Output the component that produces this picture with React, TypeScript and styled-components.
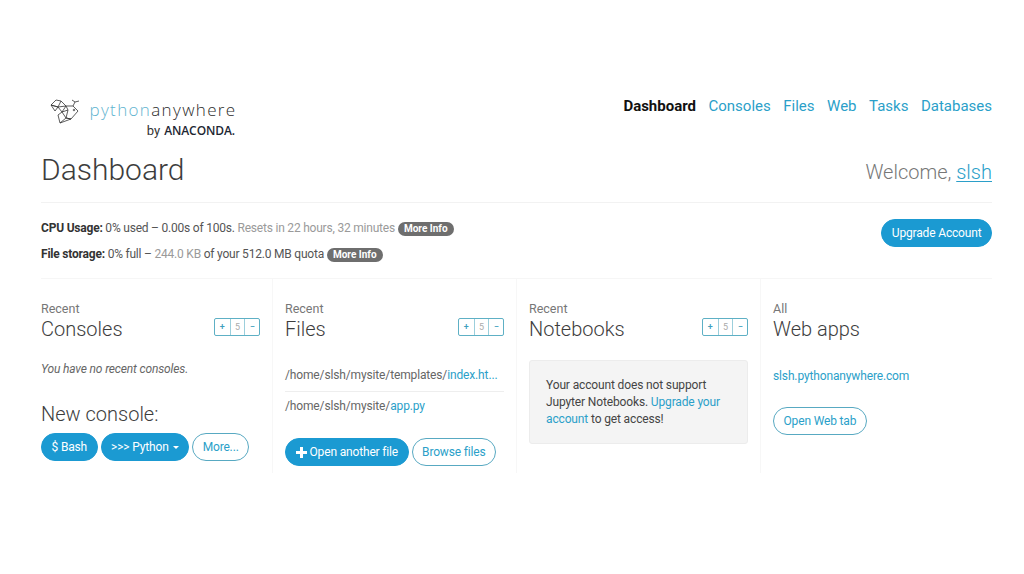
import React from "react";
import styled, { createGlobalStyle } from "styled-components";

const GlobalStyle = createGlobalStyle`
  html, body {
    margin: 0;
    padding: 0;
    background: #fff;
    font-family: Roboto, "Liberation Sans", sans-serif;
    color: #444;
  }
  * { box-sizing: border-box; }
`;

const BLUE = "#1b9ad2";
const LINK = "#2b9fc9";

const Page = styled.div`
  width: 1024px;
  height: 574px;
  padding: 92px 32px 0 41px;
  overflow: hidden;
`;

const TopBar = styled.header`
  display: flex;
  justify-content: space-between;
  align-items: flex-start;
  height: 50px;
`;

const Logo = styled.div`
  display: flex;
  flex-direction: column;
  align-items: flex-end;
  width: 194px;
  padding-top: 7px;
  position: relative;
`;

const LogoMark = styled.svg`
  position: absolute;
  left: 9px;
  top: 6px;
  width: 33px;
  height: 27px;
`;

const LogoWord = styled.div`
  margin-right: -1.5px;
  font-family: "Open Sans", sans-serif;
  font-size: 17px;
  font-weight: 300;
  line-height: 21px;
  letter-spacing: 1.35px;
  color: #2b2b2b;
  span { color: #5fb4cf; }
`;

const LogoBy = styled.div`
  display: flex;
  align-items: baseline;
  gap: 4px;
  margin-top: 2px;
  font-size: 13px;
  color: #333;
  b {
    font-family: "Open Sans", sans-serif;
    font-size: 12px;
    font-weight: 600;
    color: #1d2733;
    letter-spacing: -0.1px;
  }
`;

const Nav = styled.nav`
  display: flex;
  gap: 12.5px;
  padding-top: 3px;
`;

const NavItem = styled.a<{ $active?: boolean }>`
  font-size: 15px;
  line-height: 22px;
  font-weight: ${p => (p.$active ? 700 : 400)};
  color: ${p => (p.$active ? "#111" : LINK)};
`;

const TitleRow = styled.div`
  display: flex;
  justify-content: space-between;
  align-items: flex-start;
  height: 61px;
  padding-top: 10px;
  border-bottom: 1px solid #f2f2f2;
`;

const PageTitle = styled.h1`
  margin: 0;
  font-size: 30px;
  line-height: 36px;
  font-weight: 300;
  color: #3d3d3d;
`;

const Welcome = styled.div`
  margin-top: 7px;
  font-size: 20px;
  line-height: 26px;
  font-weight: 300;
  color: #777;
  a {
    color: ${LINK};
    text-decoration: underline;
    text-underline-offset: 2px;
    text-decoration-thickness: 1px;
  }
`;

const UsageRow = styled.div`
  display: flex;
  justify-content: space-between;
  align-items: flex-start;
  height: 76px;
  padding-top: 16px;
  border-bottom: 1px solid #f6f6f6;
`;

const UsageList = styled.div`
  display: flex;
  flex-direction: column;
  gap: 8px;
`;

const UsageLine = styled.div`
  font-size: 12px;
  line-height: 18px;
  letter-spacing: -0.21px;
  color: #555;
  b { color: #333; font-weight: 700; }
  i { font-style: normal; color: #9a9a9a; }
`;

const Badge = styled.span`
  display: inline-block;
  margin-left: 3px;
  padding: 0 6px;
  height: 14px;
  line-height: 14px;
  border-radius: 7px;
  background: #6e6e6e;
  color: #fff;
  font-size: 10px;
  font-weight: 700;
  letter-spacing: 0;
`;

const Pill = styled.a<{ $outline?: boolean }>`
  display: inline-flex;
  align-items: center;
  justify-content: center;
  gap: 3px;
  height: 28px;
  padding: 0 9.5px;
  border-radius: 14px;
  border: 1px solid ${p => (p.$outline ? "#58a9c2" : BLUE)};
  background: ${p => (p.$outline ? "#fff" : BLUE)};
  color: ${p => (p.$outline ? LINK : "#fff")};
  font-size: 12px;
  letter-spacing: -0.16px;
  white-space: nowrap;
`;

const Caret = styled.span`
  width: 0;
  height: 0;
  margin-left: 1px;
  border-left: 3px solid transparent;
  border-right: 3px solid transparent;
  border-top: 3px solid #fff;
`;

const Columns = styled.div`
  display: grid;
  grid-template-columns: 231px 244px 244px 232px;
`;

const Column = styled.section<{ $first?: boolean }>`
  height: 194px;
  padding: 23px 12px 0 ${p => (p.$first ? "0" : "12px")};
  border-left: ${p => (p.$first ? "0" : "1px solid #f7f7f7")};
`;

const ColumnHead = styled.div`
  display: flex;
  justify-content: space-between;
  align-items: flex-end;
  height: 39px;
`;

const Kicker = styled.div`
  font-size: 12.5px;
  line-height: 14px;
  color: #777;
`;

const ColumnTitle = styled.h2`
  margin: 2px 0 0;
  font-size: 20px;
  line-height: 23px;
  font-weight: 300;
  color: #3d3d3d;
`;

const Stepper = styled.div`
  display: flex;
  margin-bottom: 5px;
  height: 18px;
  border: 1px solid #5eb0c5;
  border-radius: 2px;
`;

const StepCell = styled.span<{ $muted?: boolean }>`
  width: 14.7px;
  display: flex;
  align-items: center;
  justify-content: center;
  font-size: 9px;
  font-weight: ${p => (p.$muted ? 400 : 500)};
  color: ${p => (p.$muted ? "#aaa" : "#3e9fbd")};
  & + & { border-left: 1px solid #9ccfdc; }
`;

const EmptyNote = styled.p`
  margin: 21px 0 0;
  font-size: 12px;
  line-height: 14px;
  letter-spacing: -0.15px;
  font-style: italic;
  color: #666;
`;

const SubTitle = styled.h3`
  margin: 27px 0 7px;
  font-size: 20px;
  line-height: 23px;
  font-weight: 300;
  color: #3d3d3d;
`;

const ButtonRow = styled.div`
  display: flex;
  gap: 3px;
`;

const FileRow = styled.div<{ $last?: boolean }>`
  height: 31px;
  padding-top: 6px;
  font-size: 12px;
  line-height: 16px;
  letter-spacing: -0.14px;
  color: #666;
  white-space: nowrap;
  border-bottom: ${p => (p.$last ? "0" : "1px solid #eee")};
  a { color: ${LINK}; }
`;

const FileList = styled.div`
  margin: 20px 0 15px;
`;

const Notice = styled.div`
  margin-top: 19px;
  height: 84px;
  padding: 16px;
  background: #f4f4f4;
  border: 1px solid #ececec;
  border-radius: 3px;
  font-size: 12px;
  line-height: 17px;
  letter-spacing: -0.14px;
  color: #444;
  a { color: ${LINK}; }
`;

const AppLink = styled.a`
  display: block;
  margin: 27px 0 23px;
  font-size: 12px;
  line-height: 16px;
  letter-spacing: -0.14px;
  color: ${LINK};
`;

function Count() {
  return (
    <Stepper>
      <StepCell>+</StepCell>
      <StepCell $muted>5</StepCell>
      <StepCell>−</StepCell>
    </Stepper>
  );
}

export default function App() {
  return (
    <Page>
      <GlobalStyle />
      <TopBar>
        <Logo>
          <LogoMark viewBox="0 0 33 27" fill="none" stroke="#333" strokeWidth="0.8" strokeLinejoin="round">
            <path d="M1 7 L6 2 L11 3 L8 9 Z M1 7 L8 9 L5 13 Z" />
            <path d="M11 3 L16 8 L8 9 M16 8 L12 14 L8 9" />
            <path d="M8 17 L12 14 L16 20 L10 25 Z M16 20 L21 21 L10 25" />
            <path d="M16 8 L23 8 L28 13 L21 21 L16 20 L18 12 Z M12 14 L18 12" />
            <path d="M23 8 L25 4 M25 4 L22 2 M25 4 L29 3" />
            <circle cx="24" cy="12" r="0.8" />
          </LogoMark>
          <LogoWord>
            <span>python</span>anywhere
          </LogoWord>
          <LogoBy>
            by <b>ANACONDA.</b>
          </LogoBy>
        </Logo>
        <Nav>
          <NavItem $active>Dashboard</NavItem>
          <NavItem>Consoles</NavItem>
          <NavItem>Files</NavItem>
          <NavItem>Web</NavItem>
          <NavItem>Tasks</NavItem>
          <NavItem>Databases</NavItem>
        </Nav>
      </TopBar>
      <TitleRow>
        <PageTitle>Dashboard</PageTitle>
        <Welcome>
          Welcome, <a>slsh</a>
        </Welcome>
      </TitleRow>
      <UsageRow>
        <UsageList>
          <UsageLine>
            <b>CPU Usage:</b> 0% used – 0.00s of 100s. <i>Resets in 22 hours, 32 minutes</i>
            <Badge>More Info</Badge>
          </UsageLine>
          <UsageLine>
            <b>File storage:</b> 0% full – <i>244.0 KB</i> of your 512.0 MB quota
            <Badge>More Info</Badge>
          </UsageLine>
        </UsageList>
        <Pill>Upgrade Account</Pill>
      </UsageRow>
      <Columns>
        <Column $first>
          <ColumnHead>
            <div>
              <Kicker>Recent</Kicker>
              <ColumnTitle>Consoles</ColumnTitle>
            </div>
            <Count />
          </ColumnHead>
          <EmptyNote>You have no recent consoles.</EmptyNote>
          <SubTitle>New console:</SubTitle>
          <ButtonRow>
            <Pill>$ Bash</Pill>
            <Pill>
              &gt;&gt;&gt; Python
              <Caret />
            </Pill>
            <Pill $outline>More...</Pill>
          </ButtonRow>
        </Column>
        <Column>
          <ColumnHead>
            <div>
              <Kicker>Recent</Kicker>
              <ColumnTitle>Files</ColumnTitle>
            </div>
            <Count />
          </ColumnHead>
          <FileList>
            <FileRow>
              /home/slsh/mysite/templates/<a>index.ht...</a>
            </FileRow>
            <FileRow $last>
              /home/slsh/mysite/<a>app.py</a>
            </FileRow>
          </FileList>
          <ButtonRow>
            <Pill>
              <svg width="11" height="11" viewBox="0 0 11 11">
                <path d="M4 0h3v4h4v3H7v4H4V7H0V4h4z" fill="#fff" />
              </svg>
              Open another file
            </Pill>
            <Pill $outline>Browse files</Pill>
          </ButtonRow>
        </Column>
        <Column>
          <ColumnHead>
            <div>
              <Kicker>Recent</Kicker>
              <ColumnTitle>Notebooks</ColumnTitle>
            </div>
            <Count />
          </ColumnHead>
          <Notice>
            Your account does not support Jupyter Notebooks. <a>Upgrade your account</a> to get access!
          </Notice>
        </Column>
        <Column>
          <ColumnHead>
            <div>
              <Kicker>All</Kicker>
              <ColumnTitle>Web apps</ColumnTitle>
            </div>
          </ColumnHead>
          <AppLink>slsh.pythonanywhere.com</AppLink>
          <ButtonRow>
            <Pill $outline>Open Web tab</Pill>
          </ButtonRow>
        </Column>
      </Columns>
    </Page>
  );
}
